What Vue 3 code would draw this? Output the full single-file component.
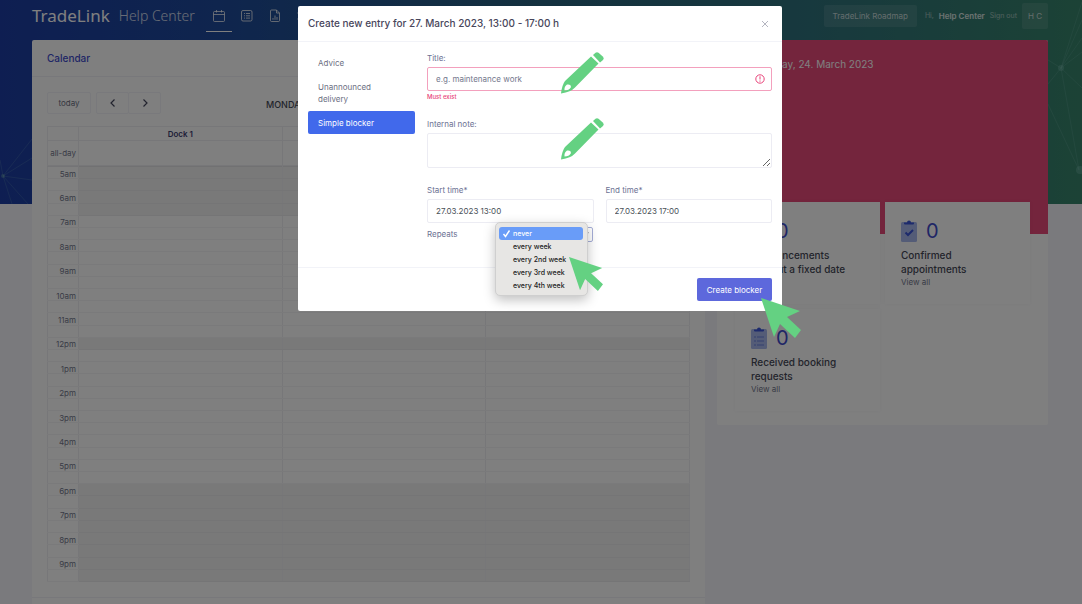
<script setup>
import { ref } from 'vue'

const hours = ['5am', '6am', '7am', '8am', '9am', '10am', '11am', '12pm', '1pm', '2pm', '3pm', '4pm', '5pm', '6pm', '7pm', '8pm', '9pm']
const closed = new Set(['5am', '6am', '6pm', '7pm', '8pm', '9pm'])
const slots = hours.flatMap((h) => [
  { key: h, label: h, full: true, off: closed.has(h) || h === '12pm' },
  { key: h + '-half', label: '', full: false, off: closed.has(h) },
])
const tabs = [
  { name: 'Advice', active: false },
  { name: 'Unannounced delivery', active: false },
  { name: 'Simple blocker', active: true },
]
const options = ['never', 'every week', 'every 2nd week', 'every 3rd week', 'every 4th week']
const stats = [
  { label: 'Announcements without a fixed date', icon: 'list', link: '' },
  { label: 'Confirmed appointments', icon: 'check', link: 'View all' },
  { label: 'Received booking requests', icon: 'list', link: 'View all' },
]
const title = ref('')
const note = ref('')
const start = ref('27.03.2023 13:00')
const end = ref('27.03.2023 17:00')
const repeats = ref('never')
</script>

<template>
  <div class="page">
    <svg class="hero" viewBox="0 0 1082 204" preserveAspectRatio="none" aria-hidden="true">
      <defs>
        <linearGradient id="sky" x1="0" y1="0" x2="1" y2="0">
          <stop offset="0" stop-color="#1c3da4" />
          <stop offset="0.2" stop-color="#1e4a9c" />
          <stop offset="0.5" stop-color="#28627e" />
          <stop offset="0.75" stop-color="#2f727c" />
          <stop offset="1" stop-color="#38856c" />
        </linearGradient>
      </defs>
      <rect width="1082" height="204" fill="url(#sky)" />
      <g stroke="#8fc7c4" stroke-opacity=".18" fill="none">
        <path d="M1061 68 1048 60M1061 68 1048 84M1061 68 1082 2M1061 68 1082 38M1061 68 1082 52M1061 68 1082 88M1061 68 1079 170M1048 104 1079 170M1061 68 1082 20" />
        <path d="M3 176 32 139M3 176 32 158M3 176 32 180M3 176 28 204M3 176 12 204M3 176 0 160" />
      </g>
      <g fill="#7fc0b4" fill-opacity=".35"><circle cx="1061" cy="68" r="3" /><circle cx="1080" cy="170" r="4" /><circle cx="3" cy="176" r="2" /></g>
    </svg>

    <header class="top">
      <a class="brand" href="#"><span class="brand-name">TradeLink</span><span class="brand-sub">Help Center</span></a>
      <nav class="menu" aria-label="Main">
        <a href="#" class="current" aria-label="Calendar">
          <svg width="14" height="14" viewBox="0 0 14 14"><path d="M2.5 2.5h9a1 1 0 0 1 1 1v8a1 1 0 0 1-1 1h-9a1 1 0 0 1-1-1v-8a1 1 0 0 1 1-1zM1.5 5.5h11M4.5 1v2.5M9.5 1v2.5" /></svg>
        </a>
        <a href="#" aria-label="List">
          <svg width="14" height="14" viewBox="0 0 14 14"><rect x="1.5" y="1.5" width="10.5" height="10.5" rx="1.5" /><path d="M4 4.5h1M6 4.5h4M4 6.8h1M6 6.8h4M4 9.1h1M6 9.1h4" /></svg>
        </a>
        <a href="#" aria-label="Reports">
          <svg width="14" height="14" viewBox="0 0 14 14"><path d="M3.5 1h5l3 3v7.5a1 1 0 0 1-1 1h-7a1 1 0 0 1-1-1v-9.5a1 1 0 0 1 1-1zM8.5 1v3h3M5 10.8V9M7 10.8V6.5M9 10.8V8" /></svg>
        </a>
        <a href="#" aria-label="Settings">
          <svg width="14" height="14" viewBox="0 0 14 14"><circle cx="4" cy="4" r="2" /><circle cx="4" cy="10" r="2" /><path d="M6 4h7M6 10h7" /></svg>
        </a>
      </nav>
      <button class="roadmap" type="button">TradeLink Roadmap</button>
      <span class="hi">Hi,</span>
      <span class="user">Help Center</span>
      <a class="signout" href="#">Sign out</a>
      <span class="avatar">H C</span>
    </header>

    <main class="content">
      <section class="card calendar">
        <h2 class="card-title">Calendar</h2>
        <div class="cal-body">
          <div class="toolbar">
            <button type="button" class="tool">today</button>
            <div class="group">
              <button type="button" class="tool arrow" aria-label="Previous"><svg width="8" height="10" viewBox="0 0 8 10"><path d="M5.5 1.5 2 5l3.5 3.5" /></svg></button>
              <button type="button" class="tool arrow" aria-label="Next"><svg width="8" height="10" viewBox="0 0 8 10"><path d="M2.5 1.5 6 5 2.5 8.5" /></svg></button>
            </div>
            <h3 class="day">MONDAY</h3>
          </div>
          <table class="grid head">
            <colgroup><col class="axis" /><col /><col /><col /></colgroup>
            <thead><tr><td></td><th scope="col">Dock 1</th><td></td><td></td></tr></thead>
            <tbody><tr class="allday"><th scope="row">all-day</th><td></td><td></td><td></td></tr></tbody>
          </table>
          <table class="grid slots">
            <colgroup><col class="axis" /><col /><col /><col /></colgroup>
            <tbody>
              <tr v-for="s in slots" :key="s.key" :class="{ full: s.full, off: s.off }">
                <th scope="row"><span>{{ s.label }}</span></th><td></td><td></td><td></td>
              </tr>
            </tbody>
          </table>
        </div>
        <div class="card-foot"></div>
      </section>

      <section class="card side">
        <div class="banner">Friday, 24. March 2023</div>
        <div class="stats">
          <article v-for="s in stats" :key="s.label" class="stat">
            <div class="count">
              <svg width="16" height="22" viewBox="0 0 16 22" aria-hidden="true">
                <rect x="0" y="2" width="16" height="20" rx="1.5" fill="#a9b9ee" />
                <path d="M3 3.5V2.5h3a2 2 0 0 1 4 0h3v1a1 1 0 0 1-1 1H4a1 1 0 0 1-1-1z" fill="#3a55d8" />
                <path v-if="s.icon === 'check'" d="M4.5 12.5 7 15l5-5" fill="none" stroke="#3a55d8" stroke-width="2" />
                <path v-else d="M3 10h2M6 10h7M3 14h2M6 14h7M3 18h2M6 18h7" fill="none" stroke="#7f93e4" stroke-width="1.5" />
              </svg>
              <span>0</span>
            </div>
            <h4>{{ s.label }}</h4>
            <a v-if="s.link" href="#">{{ s.link }}</a>
          </article>
        </div>
      </section>
    </main>

    <div class="backdrop">
      <form class="modal" role="dialog" aria-labelledby="dlg-title" @submit.prevent>
        <header class="m-head">
          <h1 id="dlg-title">Create new entry for 27. March 2023, 13:00 - 17:00 h</h1>
          <button type="button" class="close" aria-label="Close"><svg width="8" height="8" viewBox="0 0 8 8"><path d="M1 1l6 6M7 1 1 7" /></svg></button>
        </header>
        <div class="m-body">
          <nav class="tabs" aria-label="Entry type">
            <button v-for="t in tabs" :key="t.name" type="button" :class="{ active: t.active }">{{ t.name }}</button>
          </nav>
          <div class="fields">
            <div class="field marked">
              <label for="f-title">Title:</label>
              <div class="invalid">
                <input id="f-title" v-model="title" type="text" placeholder="e.g. maintenance work" />
                <svg class="warn" width="10" height="10" viewBox="0 0 10 10" aria-hidden="true"><circle cx="5" cy="5" r="4.2" /><path d="M5 2.3v3.2M5 6.5v1.2" /></svg>
              </div>
              <p class="error">Must exist</p>
              <svg class="pencil" width="46" height="44" viewBox="0 0 46 44" aria-hidden="true">
                <path fill-rule="evenodd" d="M31 5.5 38.5 12.5 15 36.5Q11 41 1 42.5Q2 34 5 30ZM7 33.5Q4 35.5 4.5 39.5Q9 39.5 10.8 36.5Q11.5 33 7 33.5Z" />
                <path d="M33 4 35.5 1.8Q37 .5 38.5 1.8L43 5.8Q44.5 7.5 43 9L40 11.5Z" />
              </svg>
            </div>
            <div class="field marked">
              <label for="f-note">Internal note:</label>
              <textarea id="f-note" v-model="note"></textarea>
              <svg class="pencil" width="46" height="44" viewBox="0 0 46 44" aria-hidden="true">
                <path fill-rule="evenodd" d="M31 5.5 38.5 12.5 15 36.5Q11 41 1 42.5Q2 34 5 30ZM7 33.5Q4 35.5 4.5 39.5Q9 39.5 10.8 36.5Q11.5 33 7 33.5Z" />
                <path d="M33 4 35.5 1.8Q37 .5 38.5 1.8L43 5.8Q44.5 7.5 43 9L40 11.5Z" />
              </svg>
            </div>
            <div class="pair">
              <div class="field"><label for="f-start">Start time*</label><input id="f-start" v-model="start" type="text" /></div>
              <div class="field"><label for="f-end">End time*</label><input id="f-end" v-model="end" type="text" /></div>
            </div>
            <div class="repeat">
              <label for="f-rep">Repeats</label>
              <div class="picker">
                <select id="f-rep" v-model="repeats"><option v-for="o in options" :key="o">{{ o }}</option></select>
                <ul class="drop" role="listbox" aria-label="Repeats">
                  <li v-for="o in options" :key="o" role="option" :aria-selected="o === repeats" :class="{ on: o === repeats }">
                    <svg v-if="o === repeats" width="9" height="9" viewBox="0 0 9 9" aria-hidden="true"><path d="M1.5 5 3.5 7.5 7.5 1.5" /></svg>{{ o }}
                  </li>
                </ul>
                <svg class="pointer" width="34" height="34" viewBox="0 0 40 40" aria-hidden="true"><path d="M0 0 39 13 26 19 40 32 34 40 19 26 13 39Z" /></svg>
              </div>
            </div>
          </div>
        </div>
        <footer class="m-foot">
          <div class="submit">
            <button type="submit">Create blocker</button>
            <svg class="pointer" width="40" height="40" viewBox="0 0 40 40" aria-hidden="true"><path d="M0 0 39 13 26 19 40 32 34 40 19 26 13 39Z" /></svg>
          </div>
        </footer>
      </form>
    </div>
  </div>
</template>

<style>
body { margin: 0; overflow: hidden; }
</style>

<style scoped>
* { box-sizing: border-box; }
h1, h2, h3, h4, p, ul { margin: 0; padding: 0; font-weight: 500; }
ul { list-style: none; }
a { text-decoration: none; color: inherit; }
button, input, textarea, select { font: inherit; color: inherit; margin: 0; }
svg { display: block; }
.page { position: relative; height: 100vh; overflow: hidden; background: #f4f4fa; font: 8px/12px Inter, "Open Sans", sans-serif; color: #595d6e; }
.hero { position: absolute; top: 0; left: 0; width: 100%; height: 204px; }

.top { position: relative; display: flex; align-items: center; height: 40px; padding: 0 34px 8px 32px; color: #fff; }
.brand { display: flex; align-items: center; gap: 9px; white-space: nowrap; font-family: "Noto Sans", sans-serif; line-height: 32px; }
.brand-name { font-size: 17px; }
.brand-sub { font-size: 14px; font-weight: 300; opacity: .8; }
.menu { display: flex; gap: 2px; margin: 0 auto 0 11px; }
.menu a { display: flex; align-items: center; justify-content: center; width: 26px; height: 32px; border-bottom: 1px solid transparent; }
.menu a.current { border-color: #fff; }
.menu svg { fill: none; stroke: #fff; stroke-opacity: .75; }
.roadmap { height: 22px; margin-right: 8px; padding: 0 9px; border: 0; border-radius: 2px; background: rgba(255, 255, 255, .1); color: rgba(255, 255, 255, .7); }
.hi, .signout { opacity: .5; font-size: 7px; }
.user { margin: 0 5px; font-weight: 600; opacity: .8; }
.avatar { width: 26px; height: 26px; margin-left: 5px; border-radius: 2px; background: rgba(255, 255, 255, .1); color: rgba(255, 255, 255, .7); line-height: 26px; text-align: center; }

.content { position: relative; display: flex; gap: 12px; align-items: flex-start; padding: 0 34px 0 32px; }
.card { background: #fff; border-radius: 2px; }
.calendar { flex: 1; min-width: 0; }
.card-title { padding: 0 15px; border-bottom: 1px solid #f0f0f6; color: #3f4ccc; font-size: 10px; line-height: 36px; }
.cal-body { padding: 15px; }
.toolbar { display: flex; align-items: center; margin-bottom: 12px; }
.tool { min-width: 44px; height: 22px; padding: 0; border: 1px solid #f2f3f8; border-radius: 2px; background: none; color: #6c6f82; }
.group { display: flex; margin-left: 5px; }
.arrow { display: flex; align-items: center; justify-content: center; min-width: 33px; }
.arrow + .arrow { margin-left: -1px; }
.arrow svg { fill: none; stroke: #44465c; stroke-width: 1.2; }
.day { margin-left: 105px; padding-top: 4px; font-size: 9px; white-space: nowrap; color: #464957; }
.grid { width: 100%; border-collapse: collapse; table-layout: fixed; }
.grid th, .grid td { padding: 0; border: 1px solid #eeeef3; line-height: 10px; }
.axis { width: 31px; }
.head thead tr { height: 14px; }
.head thead th { color: #3d4070; font-weight: 600; }
.allday { height: 25px; }
.grid tbody th { padding-right: 2px; text-align: right; font-weight: 400; color: #74788d; }
.slots { height: 416px; }
.slots tbody th, .slots tbody td { border-top-color: #f4f4f6; border-bottom-color: #f4f4f6; }
.slots th span { display: block; height: 10px; margin-bottom: -2px; }
.slots .full th, .slots .full td { border-top-color: #e8e8ec; }
.slots .off td { background: #f3f3f3; border-top-color: #ebebec; border-bottom-color: #ebebec; }
.slots .full.off td { border-top-color: #e2e2e4; }
.card-foot { height: 30px; border-top: 1px solid #f0f0f6; }

.side { width: 331px; padding-bottom: 14px; }
.banner { height: 194px; padding: 17px 47px; border-radius: 2px 2px 0 0; background: #e84a7a; color: #fff; font-size: 10px; line-height: 14px; }
.stats { display: grid; grid-template-columns: 1fr 1fr; gap: 5px; margin-top: -32px; padding: 0 18px; }
.stat { height: 102px; padding: 17px 16px 0; background: #fff; box-shadow: 0 0 4px rgba(82, 63, 105, .06); color: #464957; }
.count { display: flex; align-items: center; gap: 9px; height: 24px; color: #3f4ccc; font-size: 20px; }
.stat h4 { margin-top: 5px; font-size: 10px; line-height: 14px; }
.stat a { color: #74788d; }

.backdrop { position: absolute; inset: 0; padding: 6px 2px 0 0; background: rgba(0, 0, 0, .5); }
.modal { width: 484px; max-width: 100%; margin: 0 auto; border-radius: 2px; background: #fff; }
.m-head { display: flex; align-items: center; justify-content: space-between; padding: 0 10px; height: 36px; border-bottom: 1px solid #f2f3f8; }
.m-head h1 { color: #48465b; font-size: 10px; line-height: 35px; }
.close { padding: 3px; border: 0; background: none; }
.close svg { fill: none; stroke: #b4b5c0; }
.m-body { display: grid; grid-template-columns: 107px 1fr; gap: 12px; padding: 9px 10px 0; height: 226px; border-bottom: 1px solid #f2f3f8; }
.tabs { display: flex; flex-direction: column; align-items: stretch; gap: 1px; }
.tabs button { padding: 6px 30px 5px 10px; border: 0; border-radius: 2px; background: none; color: #6c6f82; text-align: left; }
.tabs .active { background: #4169eb; color: #fff; }
.field { display: flex; flex-direction: column; flex: 1; min-width: 0; }
label { color: #6c7293; line-height: 14px; padding-bottom: 2px; }
.field input, textarea { width: 100%; padding: 0 8px; border: 1px solid #ececf3; border-radius: 2px; background: #fff; color: #495057; outline: 0; }
.field input { height: 24px; }
textarea { display: block; height: 35px; }
input::placeholder { color: #74788d; opacity: 1; }
.invalid { display: flex; position: relative; }
.invalid input { border-color: #f3a0bd; }
.warn { position: absolute; top: 7px; right: 7px; fill: none; stroke: #e8447a; }
.error { color: #e8447a; font-size: 6px; line-height: 12px; }
.marked { position: relative; height: 66px; }
.pencil { position: absolute; top: 0; left: 133px; fill: #64d182; }
.pair { display: flex; gap: 12px; }
.repeat { display: flex; justify-content: space-between; width: 166px; padding-top: 4px; }
.picker { position: relative; }
select { display: block; width: 98px; height: 15px; border: 1px solid #a6aed8; border-radius: 2px; background: #fff; font-size: 7px; }
.drop { position: absolute; top: -5px; left: 0; width: 93px; padding: 4px 4px 3px 3px; border: 1px solid #cfcfcf; border-radius: 5px; background: #e7e6e4; box-shadow: 0 4px 12px rgba(0, 0, 0, .25); color: #222; font-size: 7px; font-weight: 500; line-height: 13px; white-space: nowrap; }
.drop li { position: relative; padding-left: 14px; }
.drop .on { border-radius: 3px; background: #699cf8; color: #fff; }
.drop svg { position: absolute; top: 2px; left: 3px; fill: none; stroke: #fff; stroke-width: 1.4; }
.pointer { position: absolute; fill: #64d182; }
.picker .pointer { top: 30px; left: 74px; }
.m-foot { display: flex; justify-content: flex-end; padding: 10px; }
.submit { position: relative; }
.submit button { min-width: 75px; height: 23px; padding: 0 8px; border: 0; border-radius: 2px; background: #5d68dc; color: #fff; white-space: nowrap; }
.submit .pointer { top: 20px; left: 64px; }
</style>
